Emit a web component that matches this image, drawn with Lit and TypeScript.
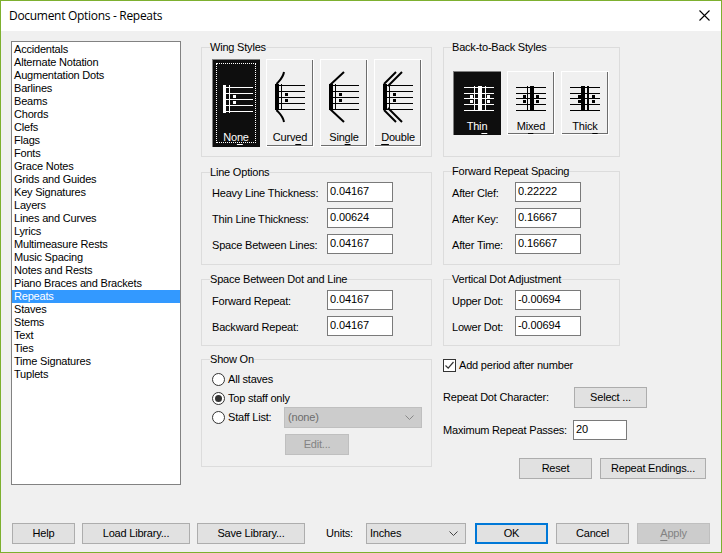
import { LitElement, html, css, svg } from "lit";
import { customElement } from "lit/decorators.js";

type R = [number, number, number, number];

const ITEMS = ["Accidentals","Alternate Notation","Augmentation Dots","Barlines","Beams","Chords","Clefs","Flags","Fonts","Grace Notes","Grids and Guides","Key Signatures","Layers","Lines and Curves","Lyrics","Multimeasure Rests","Music Spacing","Notes and Rests","Piano Braces and Brackets","Repeats","Staves","Stems","Text","Ties","Time Signatures","Tuplets"];

function icon(h: number, fg: string, lines: number[], x0: number, rects: R[], wings: string[] = []) {
  return html`<svg class="ico" width="48" height=${h} viewBox="0 0 48 ${h}">
    ${lines.map((y) => svg`<rect x=${x0} y=${y} width="30" height="1" fill=${fg} shape-rendering="crispEdges"></rect>`)}
    ${rects.map((r) => svg`<rect x=${r[0]} y=${r[1]} width=${r[2]} height=${r[3]} fill=${fg} shape-rendering="crispEdges"></rect>`)}
    ${wings.map((d) => svg`<path d=${d} fill="none" stroke=${fg} stroke-width="2"></path>`)}
  </svg>`;
}

const wingBody = (): R[] => [[9, 25, 4, 26], [15, 25, 1, 26], [19, 34, 3, 3], [19, 40, 3, 3]];

function wingIcon(kind: string) {
  const L = [26, 32, 38, 44, 50];
  if (kind === "none")
    return icon(72, "#fff", [28, 34, 40, 46, 52], 11, [[11, 26, 3, 28], [17, 26, 1, 28], [21, 36, 3, 3], [21, 42, 3, 3]]);
  if (kind === "curved")
    return icon(72, "#000", L, 9, wingBody(), [
      "M18 13 C17 19 14 21 10.5 25",
      "M18 63 C17 57 14 55 10.5 51",
    ]);
  if (kind === "single")
    return icon(72, "#000", L, 9, wingBody(), ["M24 13 L10 26", "M24 63 L10 50"]);
  return icon(72, "#000", L, 9, wingBody(), [
    "M22 13 L10 25",
    "M28 13 L14 27",
    "M22 63 L10 51",
    "M28 63 L14 49",
  ]);
}

function backIcon(kind: string) {
  const L = [16, 22, 27, 33, 39];
  if (kind === "thin")
    return icon(48, "#fff", L, 11, [[21, 15, 1, 25], [25, 15, 4, 25], [32, 15, 1, 25], [17, 24, 3, 3], [17, 29, 3, 3], [34, 24, 3, 3], [34, 29, 3, 3]]);
  if (kind === "mixed")
    return icon(48, "#000", L, 9, [[20, 15, 1, 25], [23, 15, 4, 25], [16, 24, 3, 3], [16, 29, 3, 3], [29, 24, 3, 3], [29, 29, 3, 3]]);
  return icon(48, "#000", L, 9, [[20, 15, 4, 25], [26, 15, 2, 25], [17, 24, 3, 3], [17, 29, 3, 3], [31, 24, 3, 3], [31, 29, 3, 3]]);
}

const chevron = (c: string) => html`<svg class="chev" width="9" height="5" viewBox="0 0 9 5"><path d="M0.5 0.5 L4.5 4.5 L8.5 0.5" fill="none" stroke=${c}></path></svg>`;

@customElement("app-root")
export class AppRoot extends LitElement {
  static styles = css`
    :host {
      display: block; width: 722px; height: 553px; box-sizing: border-box;
      border: 1px solid #7db02f; background: #f0f0f0; overflow: hidden;
      font: 11px/13px "Liberation Sans", Arial, sans-serif; color: #000; letter-spacing: -0.2px;
    }
    .title { height: 30px; background: #fff; display: flex; align-items: center; justify-content: space-between; padding: 0 11px 2px 8px; box-sizing: border-box; font: 12px "Open Sans", sans-serif; letter-spacing: -0.3px; }
    .x { width: 11px; height: 11px; display: block; }
    .main { display: flex; padding: 10px 0 0 10px; height: 454px; box-sizing: border-box; }
    .list { width: 170px; height: 444px; box-sizing: border-box; border: 1px solid #828282; background: #fff; padding-top: 1px; flex: none; margin-right: 20px; }
    .list div { height: 13px; padding-left: 2px; }
    .list .sel { background: #3399ff; color: #fff; }
    .col { display: flex; flex-direction: column; flex: none; }
    .c2 { width: 231px; margin-right: 11px; }
    .c3 { width: 263px; }
    .t { white-space: nowrap; }
    fieldset { margin: 0; padding: 0; border: 1px solid #dcdcdc; min-width: 0; box-sizing: border-box; display: block; }
    legend { padding: 0; margin-left: -2px; height: 13px; }
    .c3 legend { margin-left: 0; }
    .c3 fieldset { width: 177px; }
    .wing { height: 116px; padding: 5px 0 0 10px; }
    .h-btns { display: flex; gap: 6px; }
    .pic { width: 48px; box-sizing: border-box; background: #f0f0f0; box-shadow: inset -2px -2px 0 #6d6d6d, inset 1px 1px 0 #fff; text-align: center; display: flex; flex-direction: column; outline: 1px solid #fff; outline-offset: -1px; position: relative; }
    .tall { height: 88px; }
    .short { height: 64px; }
    .pic.on { background: #0e0e0e; color: #fff; box-shadow: inset 1px 1px 0 #808080; outline: none; }
    .ico { display: block; flex: none; }
    .pic u, .btn u { text-decoration-thickness: 1px; text-underline-offset: 3px; text-decoration-skip-ink: none; }
    .dots { position: absolute; inset: 4px; border: 1px dotted #fff; }
    .back { height: 116px; padding: 17px 0 0 9px; }
    .c3 .back legend { margin-left: -1px; }
    .back .pic span { margin-top: 1px; }
    .rows { display: flex; flex-direction: column; gap: 6px; }
    .row { display: flex; align-items: center; height: 20px; }
    .input { height: 20px; box-sizing: border-box; border: 1px solid #7a7a7a; background: #fff; padding: 0 2px; line-height: 17px; flex: none; letter-spacing: -0.1px; }
    .lab { padding-top: 2px; }
    .g1 { height: 99px; margin-top: 9px; padding: 3px 0 0 10px; }
    .g1 .input, .g2 .input { width: 66px; }
    .g1 .lab, .g2 .lab { width: 115px; flex: none; }
    .g2 { height: 73px; margin-top: 8px; padding: 4px 0 0 10px; }
    .c3 .g1 { margin-top: 8px; height: 100px; padding: 4px 0 0 8px; }
    .c3 .g2 { padding: 4px 0 0 8px; }
    .c3 .lab { width: 63px; }
    .show { height: 114px; margin-top: 7px; padding: 7px 0 0 10px; }
    .radio { display: flex; align-items: center; height: 13px; margin-bottom: 6px; }
    .rd { width: 13px; height: 13px; box-sizing: border-box; border: 1px solid #333; border-radius: 50%; background: #fff; margin-right: 3px; flex: none; display: flex; align-items: center; justify-content: center; }
    .rd i { width: 7px; height: 7px; border-radius: 50%; background: #333; display: block; }
    .staff { display: flex; align-items: center; height: 21px; margin-top: -4px; }
    .staff .t { width: 56px; flex: none; }
    .staff .rd { margin-right: 3px; }
    .dd { height: 21px; box-sizing: border-box; display: flex; align-items: center; justify-content: space-between; padding: 0 7px 0 3px; flex: none; }
    .dd.off { width: 138px; background: #cccccc; border: 1px solid #bfbfbf; color: #6d6d6d; margin-left: 0; }
    .dd.units { width: 100px; background: #e1e1e1; border: 1px solid #adadad; }
    .btn { height: 21px; box-sizing: border-box; background: #e1e1e1; border: 1px solid #adadad; text-align: center; line-height: 19px; flex: none; }
    .btn.off { background: #cccccc; border-color: #bfbfbf; color: #838383; }
    .btn.ok { border: 2px solid #0078d7; line-height: 17px; }
    .w64 { width: 64px; }
    .w73 { width: 73px; }
    .edit { margin: 6px 0 0 73px; }
    .check { display: flex; align-items: center; height: 13px; margin-top: 13px; }
    .cb { width: 13px; height: 13px; box-sizing: border-box; border: 1px solid #333; background: #fff; margin-right: 3px; display: block; flex: none; }
    .dot { display: flex; align-items: center; margin-top: 15px; }
    .dot .t { width: 131px; flex: none; }
    .max { display: flex; align-items: center; margin-top: 12px; }
    .max .t { width: 130px; flex: none; }
    .max .input { width: 54px; }
    .end { display: flex; gap: 8px; margin: 18px 0 0 76px; }
    .w106 { width: 106px; }
    .foot { display: flex; align-items: center; padding-left: 11px; margin-top: 38px; }
    .foot .w63 { width: 63px; }
    .foot .w108 { width: 108px; }
    .m7 { margin-left: 7px; }
    .m8 { margin-left: 8px; }
    .ml { margin-left: 21px; width: 40px; }
    .m9 { margin-left: 9px; }
  `;

  pic(kind: string, pre: string, ul: string, post: string, cls: string, on = false, dots = false) {
    return html`<div class="pic ${cls} ${on ? "on" : ""}">
      ${cls === "tall" ? wingIcon(kind) : backIcon(kind)}
      <span>${pre}<u>${ul}</u>${post}</span>
      ${dots ? html`<div class="dots"></div>` : ""}
    </div>`;
  }

  inputRow(label: string, val: string) {
    return html`<div class="row"><span class="t lab">${label}</span><span class="input">${val}</span></div>`;
  }

  render() {
    return html`
      <div class="title"><span>Document Options - Repeats</span>
        <svg class="x" viewBox="0 0 11 11"><path d="M0.5 0.5 L10.5 10.5 M10.5 0.5 L0.5 10.5" stroke="#000" stroke-width="1.1"></path></svg>
      </div>
      <div class="main">
        <div class="list">${ITEMS.map((i) => html`<div class=${i === "Repeats" ? "sel" : ""}>${i}</div>`)}</div>
        <div class="col c2">
          <fieldset class="wing"><legend>Wing Styles</legend>
            <div class="h-btns">
              ${this.pic("none", "No", "n", "e", "tall", true, true)}
              ${this.pic("curved", "Curv", "e", "d", "tall")}
              ${this.pic("single", "Sin", "g", "le", "tall")}
              ${this.pic("double", "", "D", "ouble", "tall")}
            </div>
          </fieldset>
          <fieldset class="g1"><legend>Line Options</legend>
            <div class="rows">
              ${this.inputRow("Heavy Line Thickness:", "0.04167")}
              ${this.inputRow("Thin Line Thickness:", "0.00624")}
              ${this.inputRow("Space Between Lines:", "0.04167")}
            </div>
          </fieldset>
          <fieldset class="g2"><legend>Space Between Dot and Line</legend>
            <div class="rows">
              ${this.inputRow("Forward Repeat:", "0.04167")}
              ${this.inputRow("Backward Repeat:", "0.04167")}
            </div>
          </fieldset>
          <fieldset class="show"><legend>Show On</legend>
            <div class="radio"><span class="rd"></span><span class="t">All staves</span></div>
            <div class="radio"><span class="rd"><i></i></span><span class="t">Top staff only</span></div>
            <div class="staff"><span class="rd"></span><span class="t">Staff List:</span>
              <div class="dd off"><span class="t">(none)</span>${chevron("#888")}</div>
            </div>
            <div class="btn off w64 edit">Edit...</div>
          </fieldset>
        </div>
        <div class="col c3">
          <fieldset class="back"><legend>Back-to-Back Styles</legend>
            <div class="h-btns">
              ${this.pic("thin", "Thi", "n", "", "short", true)}
              ${this.pic("mixed", "Mi", "x", "ed", "short")}
              ${this.pic("thick", "Thic", "k", "", "short")}
            </div>
          </fieldset>
          <fieldset class="g1"><legend>Forward Repeat Spacing</legend>
            <div class="rows">
              ${this.inputRow("After Clef:", "0.22222")}
              ${this.inputRow("After Key:", "0.16667")}
              ${this.inputRow("After Time:", "0.16667")}
            </div>
          </fieldset>
          <fieldset class="g2"><legend>Vertical Dot Adjustment</legend>
            <div class="rows">
              ${this.inputRow("Upper Dot:", "-0.00694")}
              ${this.inputRow("Lower Dot:", "-0.00694")}
            </div>
          </fieldset>
          <div class="check">
            <svg class="cb" viewBox="0 0 11 11"><path d="M1.5 5.5 L4.2 8.2 L9.5 2" fill="none" stroke="#333" stroke-width="1.2"></path></svg>
            <span class="t">Add period after number</span>
          </div>
          <div class="dot"><span class="t">Repeat Dot Character:</span><div class="btn w73">Select ...</div></div>
          <div class="max"><span class="t">Maximum Repeat Passes:</span><span class="input">20</span></div>
          <div class="end"><div class="btn w73">Reset</div><div class="btn w106">Repeat Endings...</div></div>
        </div>
      </div>
      <div class="foot">
        <div class="btn w63">Help</div>
        <div class="btn w108 m7">Load Library...</div>
        <div class="btn w108 m7">Save Library...</div>
        <span class="t ml">Units:</span>
        <div class="dd units"><span class="t">Inches</span>${chevron("#444")}</div>
        <div class="btn ok w73 m9">OK</div>
        <div class="btn w73 m8">Cancel</div>
        <div class="btn off w73 m8"><u>A</u>pply</div>
      </div>
    `;
  }
}
